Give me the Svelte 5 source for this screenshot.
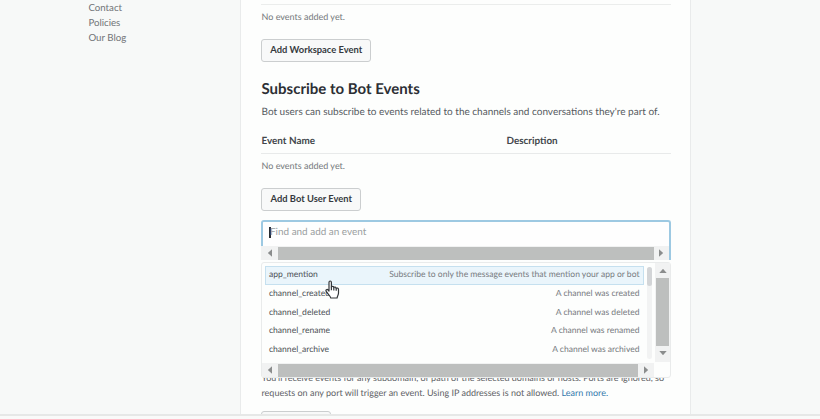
<script>
  const links = ['Contact', 'Policies', 'Our Blog'];
  const events = [
    { name: 'app_mention', text: 'Subscribe to only the message events that mention your app or bot' },
    { name: 'channel_created', text: 'A channel was created' },
    { name: 'channel_deleted', text: 'A channel was deleted' },
    { name: 'channel_rename', text: 'A channel was renamed' },
    { name: 'channel_archive', text: 'A channel was archived' }
  ];
</script>

{#snippet arrow(dir)}
  <svg class="arrow {dir}" width="8" height="8" viewBox="0 0 8 8"><path d="M2 0.3 L6.2 4 L2 7.7 Z" /></svg>
{/snippet}

<div class="page">
  <nav>
    {#each links as link}<a href="#top">{link}</a>{/each}
  </nav>
  <main>
    <div class="rule"></div>
    <div class="empty first"><span>No events added yet.</span></div>
    <button class="workspace"><span>Add Workspace Event</span></button>
    <h2><span>Subscribe to Bot Events</span></h2>
    <p class="intro"><span>Bot users can subscribe to events related to the channels and conversations they're part of.</span></p>
    <div class="head"><span>Event Name</span><span>Description</span></div>
    <div class="empty"><span>No events added yet.</span></div>
    <button class="bot"><span>Add Bot User Event</span></button>

    <div class="picker">
      <div class="field"><i class="caret"></i><span>Find and add an event</span></div>
      <div class="hbar top">{@render arrow('left')}<div class="thumb"></div>{@render arrow('right')}</div>
      <div class="menu">
        <div class="body">
          <div class="list">
            {#each events as event, i}
              <div class="item" class:active={i === 0}>
                <span class="name">{event.name}</span><span class="desc">{event.text}</span>
              </div>
            {/each}
          </div>
          <div class="track"><div class="slim"></div></div>
          <div class="vbar">{@render arrow('up')}<div class="thumb"></div>{@render arrow('down')}</div>
        </div>
        <div class="foot">
          <div class="hbar">{@render arrow('left')}<div class="thumb"></div>{@render arrow('right')}</div>
        </div>
      </div>
      <svg class="pointer" width="15" height="20" viewBox="0 0 15 20">
        <path d="M4 11 V2.4 C4 0.5 6.4 0.5 6.4 2.4 V7 C6.8 5.9 8.8 6.1 8.8 7.6 C9.4 6.6 11.2 6.9 11.2 8.4 C12 7.6 13.5 8.1 13.5 9.6 V13 C13.5 15 12.3 15.7 12.1 18 H5.8 C5.5 15.8 3 14.4 1.2 11.4 C0.3 9.9 2.1 8.9 3.1 10 Z" />
        <path d="M6.4 6.8 V10.2 M8.8 7.5 V10.4 M11.2 8.3 V10.8" />
      </svg>
    </div>

    <div class="note">
      <div>You'll receive events for any subdomain, or path of the selected domains or hosts. Ports are ignored, so</div>
      <div>requests on any port will trigger an event. Using IP addresses is not allowed. <a href="#more">Learn more.</a></div>
    </div>
    <div class="stub"></div>
  </main>
  <footer></footer>
</div>

<style>
  :global(body) { background: #f7f9f8; }
  .page {
    position: relative; box-sizing: border-box; width: 820px; height: 419px; overflow: hidden;
    display: flex; background: #f7f9f8; color: #555a60;
    font-family: Lato, "Liberation Sans", sans-serif; font-size: 10px; white-space: nowrap;
    text-rendering: geometricPrecision;
  }
  nav { width: 240px; box-sizing: border-box; padding: 1px 0 0 88.4px; flex: none; }
  nav a { display: block; color: #717477; text-decoration: none; font-size: 9.7px; line-height: 15px; }
  main {
    box-sizing: border-box; width: 451px; height: 419px; padding: 4px 19px 0 20px;
    border: solid #e9ebeb; border-width: 0 1px; background: #fdfefd; flex: none;
    display: flex; flex-direction: column; align-items: stretch;
  }
  main > * { flex: none; }
  .rule { height: 1px; background: #ebedec; }
  .empty { height: 25px; line-height: 25px; padding-left: 0.5px; color: #75797c; font-size: 9px; }
  .empty.first { height: 34px; line-height: 24px; }
  button {
    box-sizing: border-box; height: 23px; padding: 0; align-self: flex-start;
    border: 1px solid #cbcecf; border-radius: 3px; background: #f8f9f9; color: #35393e;
    font: 700 9.35px/19px Lato, sans-serif;
  }
  button span { display: block; height: 21px; padding-left: 0.5px; }
  .workspace { width: 110px; }
  .bot { width: 100px; margin-top: 10px; }
  h2 { margin: 15px 0 0; height: 24px; line-height: 24px; padding-left: 0.5px; font-size: 15px; font-weight: 700; color: #2c2f34; }
  .intro { margin: 0; height: 21px; line-height: 23px; padding-left: 0.5px; font-size: 10px; }
  .head {
    display: grid; grid-template-columns: 245px 1fr; box-sizing: border-box; margin-top: 8px;
    height: 24px; line-height: 23px; border-bottom: 1px solid #e8eaea; padding-left: 0.5px;
    font-size: 9.9px; font-weight: 700; color: #43474c;
  }
  .head + .empty { height: 24px; line-height: 24px; }
  .picker { position: relative; height: 150px; margin-top: 9px; }
  .field {
    box-sizing: border-box; width: 410px; height: 40px; padding-left: 6px; display: flex; align-items: flex-start;
    border: solid #9dc9e2; border-width: 2px 2px 0; border-radius: 3px 3px 0 0; background: #fefefe;
    color: #9b9fa1; font-size: 9.95px; line-height: 21px;
  }
  .caret { width: 2px; height: 11px; margin: 5px -1px 0 0; background: #292d32; }
  .hbar { box-sizing: border-box; height: 14px; display: flex; align-items: center; background: #f1f2f2; }
  .hbar .thumb { flex: 1; height: 13px; margin: 0 4px; background: #bdbfbe; }
  .hbar.top { position: absolute; left: 0; top: 26px; width: 408px; height: 14px; padding: 0 4px 0 5px; }
  .hbar.top .thumb { margin-right: 3px; }
  .arrow { flex: none; fill: #8b8d8d; }
  .left { transform: rotate(180deg); }
  .up { transform: rotate(-90deg); }
  .down { transform: rotate(90deg); }
  .menu {
    position: absolute; left: 0; top: 42px; width: 410px; height: 116px; box-sizing: border-box;
    border: 1px solid #e9ebeb; border-radius: 3px; background: #fdfefd; display: flex; flex-direction: column;
  }
  .body { height: 101px; display: flex; }
  .list { width: 382px; padding: 3px 0 0 3px; box-sizing: border-box; }
  .item {
    box-sizing: border-box; height: 18.8px; padding: 0 3.5px 0 3px; display: flex; justify-content: space-between;
    border: 1px solid transparent; line-height: 15px; font-size: 8.55px;
  }
  .item.active { border-color: #c5e0ef; background: #eaf5fb; }
  .name { color: #4c5055; }
  .desc { color: #777b7f; }
  .track { width: 5px; height: 92px; margin: 4px 3px 0; border-radius: 3px; background: #f2f3f3; }
  .slim { height: 19px; border-radius: 3px; background: #d3d5d7; }
  .vbar { width: 15px; height: 99px; display: flex; flex-direction: column; align-items: center; background: #f1f2f2; box-sizing: border-box; padding: 4px 0 5px; }
  .vbar .thumb { width: 13px; flex: 1; margin: 3px 0 3px; background: #bdbfbe; }
  .foot { height: 14px; }
  .foot .hbar { width: 392px; padding: 0 4px; }
  .pointer { position: absolute; left: 64px; top: 60px; fill: #fff; stroke: #34373b; stroke-width: 1.2; stroke-linejoin: round; }
  .note { height: 41px; line-height: 15px; padding-left: 0.5px; font-size: 9px; color: #5d6165; }
  .note a { color: #3278ac; text-decoration: none; }
  .stub { box-sizing: border-box; width: 70px; height: 23px; border: 1px solid #cbcecf; border-radius: 3px; background: #f8f9f9; }
  footer { position: absolute; left: 0; top: 414px; width: 820px; height: 5px; box-sizing: border-box; border-top: 2px solid #e6e8e7; background: #f9faf9; }
</style>
